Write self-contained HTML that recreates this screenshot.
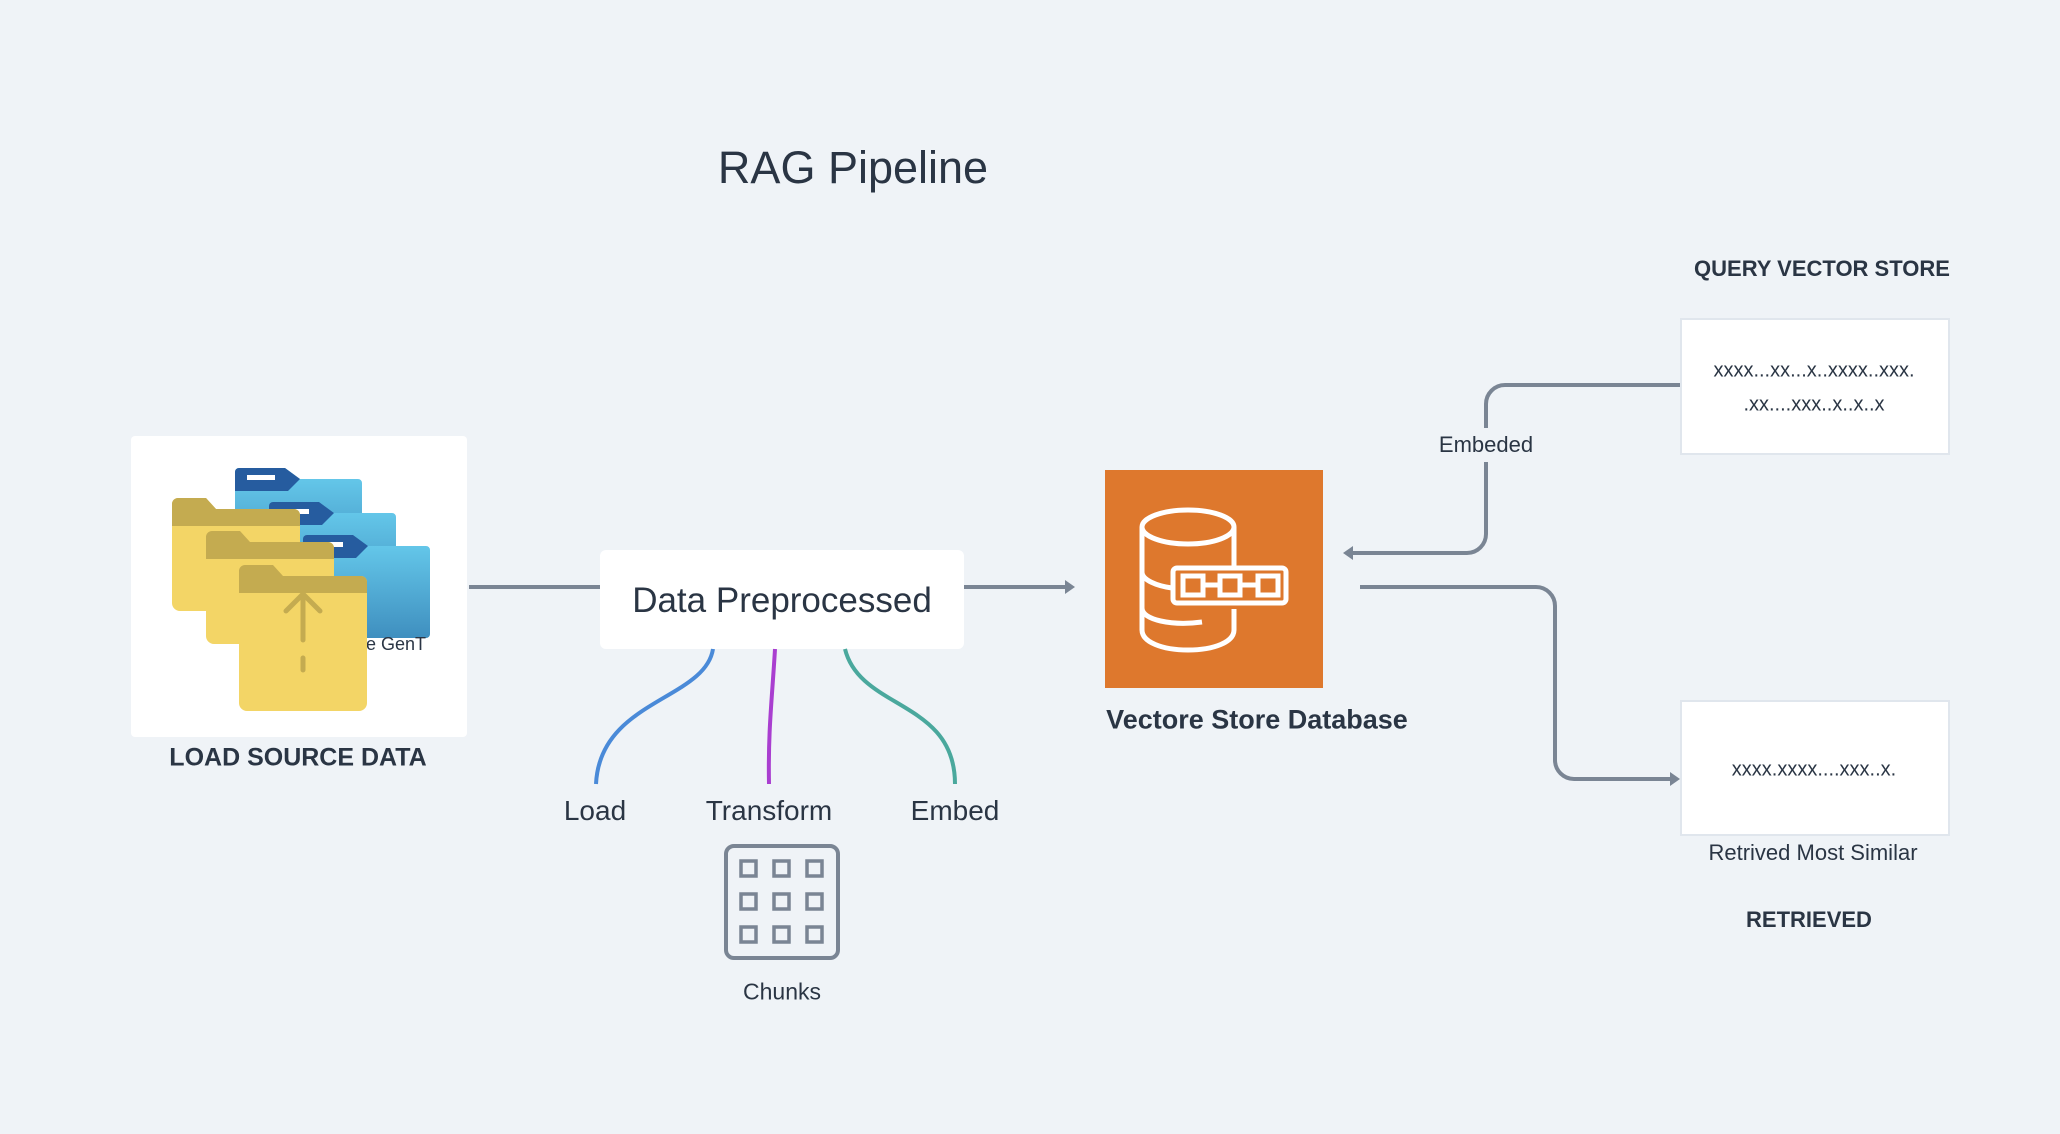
<!DOCTYPE html>
<html><head><meta charset="utf-8"><style>
html,body{margin:0;padding:0;background:#eff3f7;}
body{width:2060px;height:1134px;position:relative;overflow:hidden;font-family:"Liberation Sans",sans-serif;color:#2a3544;}
.t{position:absolute;white-space:nowrap;transform:translate(-50%,-50%);}
.b{font-weight:bold;}
.box{position:absolute;background:#fff;}
</style></head><body>
<div class="t" style="left:853px;top:168px;font-size:45px;">RAG Pipeline</div>

<div class="box" style="left:131px;top:436px;width:336px;height:301px;border-radius:4px;"></div>
<div class="box" style="left:600px;top:550px;width:364px;height:99px;border-radius:6px;"></div>
<div class="box" style="left:1680px;top:318px;width:266px;height:133px;border:2px solid #e0e6ed;"></div>
<div class="box" style="left:1680px;top:700px;width:266px;height:132px;border:2px solid #e0e6ed;"></div>
<div style="position:absolute;left:1105px;top:470px;width:218px;height:218px;background:#de782d;"></div>

<svg width="2060" height="1134" style="position:absolute;left:0;top:0">
<defs>
<linearGradient id="bg" x1="0" y1="0" x2="0" y2="1"><stop offset="0" stop-color="#68cdee"/><stop offset="1" stop-color="#3f8fbf"/></linearGradient>
<g id="bf">
<path d="M0 4 a4 4 0 0 1 4 -4 h46 l15 11 h58 a4 4 0 0 1 4 4 v84 a4 4 0 0 1 -4 4 h-119 a4 4 0 0 1 -4 -4z" fill="url(#bg)"/>
<path d="M0 4 a4 4 0 0 1 4 -4 h46 l15 11 l-12 12 h-53z" fill="#265c9f"/>
<rect x="12" y="7" width="28" height="5" fill="#fff"/>
</g>
<g id="yf">
<path d="M0 6 a6 6 0 0 1 6 -6 h28 l10 11 h78 a6 6 0 0 1 6 6 v88 a8 8 0 0 1 -8 8 h-112 a8 8 0 0 1 -8 -8z" fill="#f3d566"/>
<path d="M0 6 a6 6 0 0 1 6 -6 h28 l10 11 h78 a6 6 0 0 1 6 6 v11 h-128z" fill="#c4ab50"/>
</g>
</defs>
<use href="#bf" x="235" y="468"/>
<use href="#bf" x="269" y="502"/>
<use href="#bf" x="303" y="535"/>
<text x="366" y="650" font-size="18" fill="#2a3544" font-family="Liberation Sans">e GenT</text>
<use href="#yf" x="172" y="498"/>
<use href="#yf" x="206" y="531"/>
<g transform="translate(239,565)">
<path d="M0 6 a6 6 0 0 1 6 -6 h28 l10 11 h78 a6 6 0 0 1 6 6 v121 a8 8 0 0 1 -8 8 h-112 a8 8 0 0 1 -8 -8z" fill="#f3d566"/>
<path d="M0 6 a6 6 0 0 1 6 -6 h28 l10 11 h78 a6 6 0 0 1 6 6 v11 h-128z" fill="#c4ab50"/>
<path d="M64 75 v-50 M47 46 l17 -17 l17 17 M64 93 v12" stroke="#c4ab50" stroke-width="5" stroke-linecap="round" fill="none"/>
</g>

<g stroke="#7a8594" stroke-width="4" fill="none">
<path d="M469 587 H600"/>
<path d="M964 587 H1068"/>
<path d="M1680 385 H1505 a19 19 0 0 0 -19 19 V534 a19 19 0 0 1 -19 19 H1350"/>
<path d="M1360 587 H1536 a19 19 0 0 1 19 19 V760 a19 19 0 0 0 19 19 H1672"/>
</g>
<path d="M1075 587 l-10 -7 v14z" fill="#7a8594"/>
<path d="M1343 553 l10 -7 v14z" fill="#7a8594"/>
<path d="M1680 779 l-10 -7 v14z" fill="#7a8594"/>

<path d="M713 649 C705 700 600 700 596 784" stroke="#4a8ad8" stroke-width="4" fill="none"/>
<path d="M775 649 C772 700 768 730 769 784" stroke="#a93ed0" stroke-width="4" fill="none"/>
<path d="M845 649 C860 710 955 700 955 784" stroke="#4aa89d" stroke-width="4" fill="none"/>

<rect x="726" y="846" width="112" height="112" rx="8" fill="none" stroke="#7a8594" stroke-width="4"/>
<g fill="none" stroke="#7a8594" stroke-width="3.5">
<rect x="741" y="861" width="15" height="15"/><rect x="774" y="861" width="15" height="15"/><rect x="807" y="861" width="15" height="15"/>
<rect x="741" y="894" width="15" height="15"/><rect x="774" y="894" width="15" height="15"/><rect x="807" y="894" width="15" height="15"/>
<rect x="741" y="927" width="15" height="15"/><rect x="774" y="927" width="15" height="15"/><rect x="807" y="927" width="15" height="15"/>
</g>

<g fill="none" stroke="#fff" stroke-width="5">
<ellipse cx="1188" cy="527" rx="46" ry="17"/>
<path d="M1142 527 V630 c0 12 20 20 46 20 s46 -8 46 -20 V609"/>
<path d="M1234 527 V568"/>
<path d="M1142 572 c0 8 15 14 30 16"/>
<path d="M1142 608 c0 12 30 18 60 14"/>
<rect x="1173" y="568" width="113" height="35" rx="4"/>
<rect x="1183" y="576" width="20" height="19"/><rect x="1220" y="576" width="20" height="19"/><rect x="1258" y="576" width="20" height="19"/>
<path d="M1203 585 h17 M1240 585 h18"/>
</g>
</svg>

<div class="t b" style="left:298px;top:758px;font-size:25px;">LOAD SOURCE DATA</div>
<div class="t" style="left:782px;top:601px;font-size:35px;">Data Preprocessed</div>
<div class="t" style="left:595px;top:811px;font-size:28px;">Load</div>
<div class="t" style="left:769px;top:811px;font-size:28px;">Transform</div>
<div class="t" style="left:955px;top:811px;font-size:28px;">Embed</div>
<div class="t" style="left:782px;top:992px;font-size:23px;">Chunks</div>
<div class="t b" style="left:1257px;top:720px;font-size:27px;">Vectore Store Database</div>
<div class="t b" style="left:1822px;top:269px;font-size:22px;">QUERY VECTOR STORE</div>
<div class="t" style="left:1814px;top:371px;font-size:20px;">xxxx...xx...x..xxxx..xxx.</div>
<div class="t" style="left:1814px;top:405px;font-size:20px;">.xx....xxx..x..x..x</div>
<div class="t" style="left:1486px;top:445px;font-size:22px;background:#eff3f7;padding:4px 2px;">Embeded</div>
<div class="t" style="left:1814px;top:770px;font-size:20px;">xxxx.xxxx....xxx..x.</div>
<div class="t" style="left:1813px;top:853px;font-size:22px;">Retrived Most Similar</div>
<div class="t b" style="left:1809px;top:920px;font-size:22px;">RETRIEVED</div>
</body></html>
